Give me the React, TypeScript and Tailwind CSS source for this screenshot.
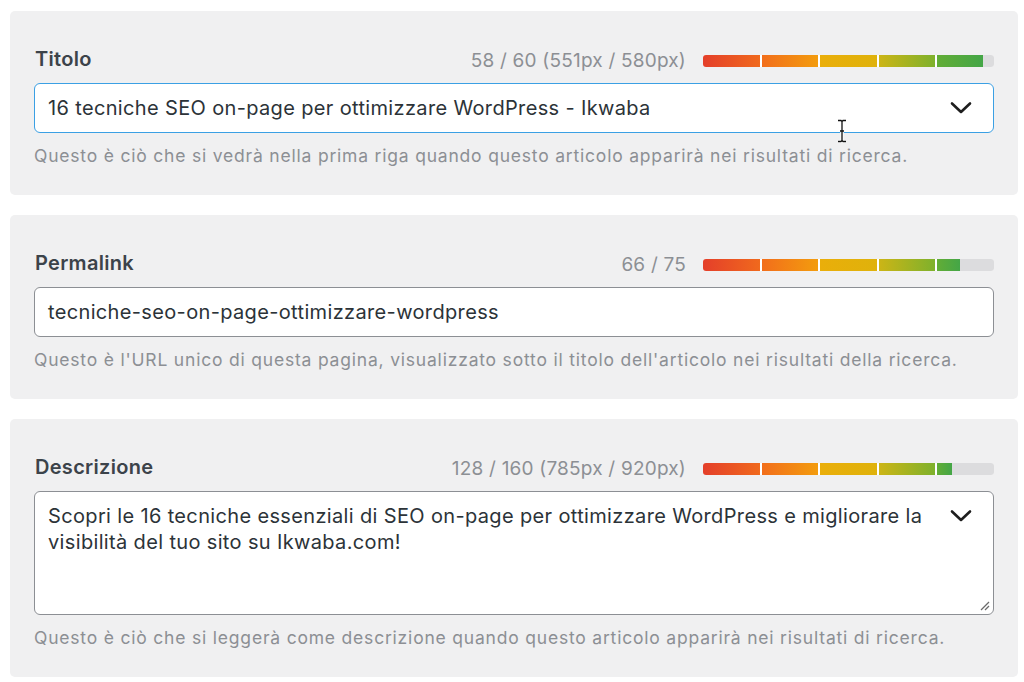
import type { ReactNode } from 'react';

type Field = {
  key: string;
  label: string;
  counter: string;
  ratio: number;
  value: ReactNode;
  help: string;
  focused?: boolean;
  multiline?: boolean;
  dropdown?: boolean;
};

const FIELDS: Field[] = [
  {
    key: 'title',
    label: 'Titolo',
    counter: '58 / 60 (551px / 580px)',
    ratio: 0.962,
    value: '16 tecniche SEO on-page per ottimizzare WordPress - Ikwaba',
    help: 'Questo è ciò che si vedrà nella prima riga quando questo articolo apparirà nei risultati di ricerca.',
    focused: true,
    dropdown: true,
  },
  {
    key: 'permalink',
    label: 'Permalink',
    counter: '66 / 75',
    ratio: 0.88,
    value: 'tecniche-seo-on-page-ottimizzare-wordpress',
    help: "Questo è l'URL unico di questa pagina, visualizzato sotto il titolo dell'articolo nei risultati della ricerca.",
  },
  {
    key: 'description',
    label: 'Descrizione',
    counter: '128 / 160 (785px / 920px)',
    ratio: 0.853,
    value: (
      <>
        Scopri le 16 tecniche essenziali di SEO on-page per ottimizzare WordPress e migliorare la
        <br />
        visibilità del tuo sito su Ikwaba.com!
      </>
    ),
    help: 'Questo è ciò che si leggerà come descrizione quando questo articolo apparirà nei risultati di ricerca.',
    multiline: true,
    dropdown: true,
  },
];

// one gradient per segment, red -> green
const SEGMENTS = [
  'bg-[linear-gradient(to_right,#e43f2a,#f0691d)]',
  'bg-[linear-gradient(to_right,#f26e1b,#f39c0e)]',
  'bg-[linear-gradient(to_right,#eaae0a,#dfb20b)]',
  'bg-[linear-gradient(to_right,#ccb516,#7eb12c)]',
  'bg-[linear-gradient(to_right,#62ad36,#44a647)]',
];

function ScoreBar({ ratio }: { ratio: number }) {
  return (
    <div className="flex h-[12px] w-[291px] gap-[2px] overflow-hidden rounded-[3px] bg-white">
      {SEGMENTS.map((grad, i) => {
        const fill = Math.max(0, Math.min(1, ratio * 5 - i));
        return (
          <div key={i} className="h-full flex-1 bg-[#dcdcde]">
            <div className={`h-full ${grad}`} style={{ width: `${fill * 100}%` }} />
          </div>
        );
      })}
    </div>
  );
}

function Chevron() {
  return (
    <svg width="22" height="14" viewBox="0 0 22 14" className="shrink-0">
      <polyline
        points="2,2.5 11,11 20,2.5"
        fill="none"
        stroke="#1e1e1e"
        strokeWidth="2.6"
        strokeLinecap="round"
        strokeLinejoin="round"
      />
    </svg>
  );
}

function FieldPanel({ field }: { field: Field }) {
  const border = field.focused
    ? 'border-[1.5px] border-[#3ba0e4]'
    : 'border border-[#8c8f94]';
  return (
    <div className="rounded-[5px] bg-[#f0f0f1] px-6 pt-9 pb-7">
      <div className="flex h-6 items-center justify-between">
        <span className="pl-px text-[20px] font-semibold leading-6 tracking-[0.3px] text-[#3c434a]">
          {field.label}
        </span>
        <div className="mt-1 flex items-center gap-[17px]">
          <span className="text-[19px] leading-6 tracking-[0.2px] text-[#8c8f94]">{field.counter}</span>
          <ScoreBar ratio={field.ratio} />
        </div>
      </div>

      {field.multiline ? (
        <div className={`relative mt-3 flex h-[124px] items-start rounded-[6px] bg-white pl-[13px] pr-[21px] pt-[11px] ${border}`}>
          <div className="flex-1 whitespace-nowrap text-[20px] leading-[26px] tracking-[0.35px] text-[#2c3338]">
            {field.value}
          </div>
          <div className="pt-[6px]">
            <Chevron />
          </div>
          <svg width="10" height="10" viewBox="0 0 10 10" className="absolute bottom-[3px] right-[3px]">
            <line x1="1" y1="9" x2="9" y2="1" stroke="#6b6b6b" strokeWidth="1.2" />
            <line x1="5" y1="9" x2="9" y2="5" stroke="#6b6b6b" strokeWidth="1.2" />
          </svg>
        </div>
      ) : (
        <div className={`mt-3 flex h-[50px] items-center rounded-[6px] bg-white pl-[13px] pr-[21px] ${border}`}>
          <div className="flex-1 whitespace-nowrap text-[20px] leading-6 tracking-[0.35px] text-[#2c3338]">
            {field.value}
          </div>
          {field.dropdown && <Chevron />}
        </div>
      )}

      <p className="mt-3 whitespace-nowrap text-[17.5px] leading-[22px] tracking-[0.8px] text-[#8c8f94]">
        {field.help}
      </p>
    </div>
  );
}

export default function App() {
  return (
    <div className="relative min-h-[682px] w-[1024px] bg-white pl-[10px] pr-[6px] pt-[11px] font-['Inter','Noto_Sans',sans-serif]">
      <div className="flex flex-col gap-5">
        {FIELDS.map((f) => (
          <FieldPanel key={f.key} field={f} />
        ))}
      </div>

      {/* mouse text cursor */}
      <svg width="12" height="24" viewBox="0 0 12 24" className="absolute left-[836px] top-[119px]">
        <path
          d="M2 1.5h3l1 1 1-1h3M6 2.5v19M2 22.5h3l1-1 1 1h3M4 12h4"
          fill="none"
          stroke="#fff"
          strokeWidth="3"
        />
        <path
          d="M2 1.5h3l1 1 1-1h3M6 2.5v19M2 22.5h3l1-1 1 1h3M4 12h4"
          fill="none"
          stroke="#111"
          strokeWidth="1.3"
        />
      </svg>
    </div>
  );
}
